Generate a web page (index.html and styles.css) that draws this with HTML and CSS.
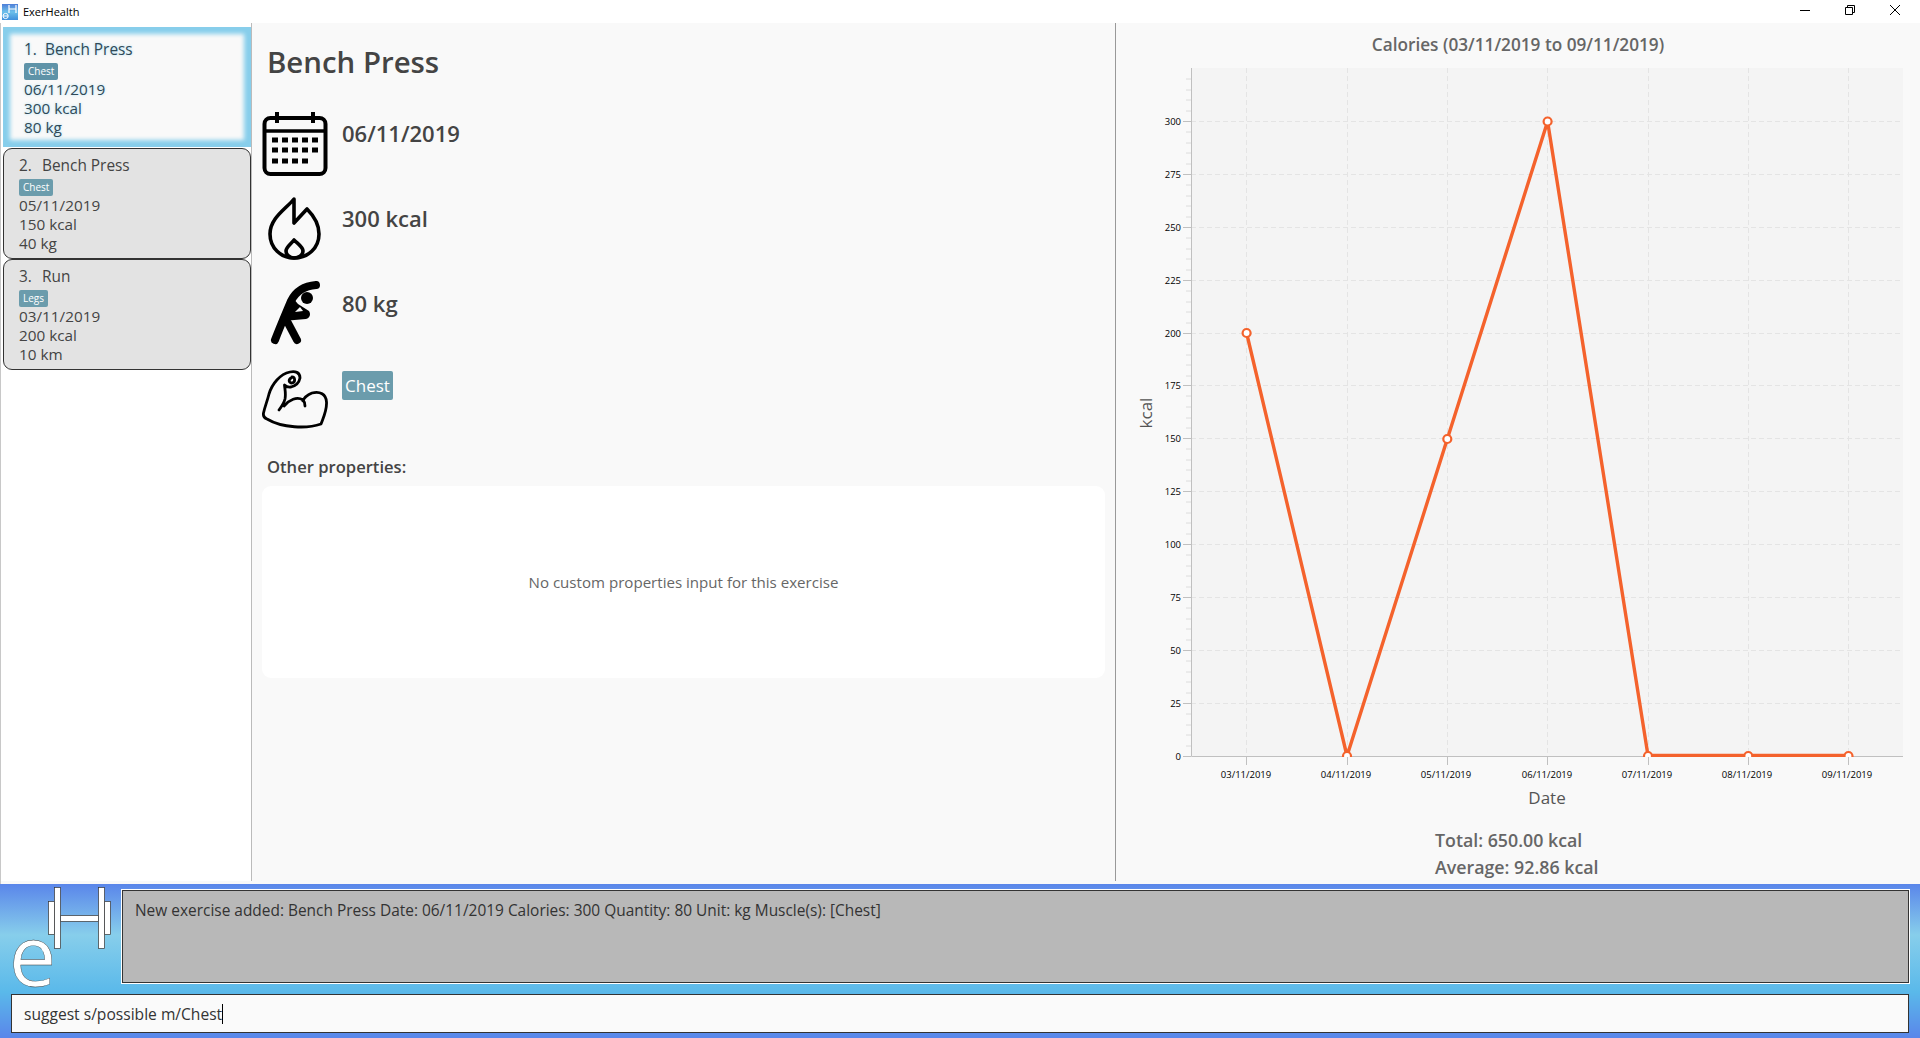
FILE: index.html
```html
<!DOCTYPE html>
<html lang="en">
<head>
<meta charset="utf-8">
<title>ExerHealth</title>
<link rel="stylesheet" href="styles.css">
</head>
<body>
<div class="window">
  <header class="titlebar">
    <div class="app-title">
      <svg class="app-icon" width="16" height="16" viewBox="0 0 16 16">
        <defs><linearGradient id="ig" x1="0" y1="0" x2="0" y2="1"><stop offset="0" stop-color="#4f7fd8"/><stop offset="0.5" stop-color="#6cc0ea"/><stop offset="1" stop-color="#3f8fdc"/></linearGradient></defs>
        <rect width="16" height="16" fill="url(#ig)"/>
        <path d="M7 1v8M14 1v8M7 5h7" stroke="#fff" stroke-width="1.2" fill="none"/>
        <circle cx="3.6" cy="12" r="2.6" stroke="#fff" stroke-width="1" fill="none"/>
        <path d="M1 12h5" stroke="#fff" stroke-width="1"/>
      </svg>
      <span>ExerHealth</span>
    </div>
    <div class="controls">
      <svg width="10" height="10" viewBox="0 0 10 10"><path d="M0 5.5h10" stroke="#000" fill="none"/></svg>
      <svg width="10" height="10" viewBox="0 0 10 10"><path d="M.5 2.5h7v7h-7zM2.5 2.5v-2h7v7h-2" stroke="#000" fill="none"/></svg>
      <svg width="10" height="10" viewBox="0 0 10 10"><path d="M0 0l10 10M10 0L0 10" stroke="#000" fill="none"/></svg>
    </div>
  </header>

  <main class="main">
    <aside class="list">
      <article class="card selected">
        <div class="card-title"><span class="num">1.</span>Bench Press</div>
        <span class="tag">Chest</span>
        <div class="card-line">06/11/2019</div>
        <div class="card-line">300 kcal</div>
        <div class="card-line">80 kg</div>
      </article>
      <article class="card">
        <div class="card-title"><span class="num">2.</span>Bench Press</div>
        <span class="tag">Chest</span>
        <div class="card-line">05/11/2019</div>
        <div class="card-line">150 kcal</div>
        <div class="card-line">40 kg</div>
      </article>
      <article class="card">
        <div class="card-title"><span class="num">3.</span>Run</div>
        <span class="tag">Legs</span>
        <div class="card-line">03/11/2019</div>
        <div class="card-line">200 kcal</div>
        <div class="card-line">10 km</div>
      </article>
    </aside>

    <section class="detail">
      <h1 class="detail-title">Bench Press</h1>
      <div class="prop">
        <svg class="prop-icon" width="66" height="66" viewBox="0 0 66 66" fill="none" stroke="#000">
          <rect x="2.5" y="7" width="61" height="56" rx="6" stroke-width="4"/>
          <path d="M2 20h62" stroke-width="3.5"/>
          <path d="M15 1v11M51 1v11" stroke-width="4"/>
          <path d="M10 29h6M20 29h6M30 29h6M40 29h6M50 29h6M10 39h6M20 39h6M30 39h6M40 39h6M50 39h6M10 50h6M20 50h6M30 50h6M40 50h6" stroke-width="5"/>
        </svg>
        <span class="prop-text">06/11/2019</span>
      </div>
      <div class="prop">
        <svg class="prop-icon" width="66" height="66" viewBox="0 0 66 66" fill="none" stroke="#000" stroke-width="3.6" stroke-linejoin="round">
          <path d="M32 3C24 13 8 22 8 38C8 52 19 62 32 62C46 62 57 52 57 38C57 29 52 20 45 13L32 27Z"/>
          <path d="M32 44C28 49 24 51 24 55C24 59 28 62 32 62C37 62 41 59 41 55C41 51 36 48 32 44Z"/>
        </svg>
        <span class="prop-text">300 kcal</span>
      </div>
      <div class="prop">
        <svg class="prop-icon" width="66" height="66" viewBox="0 0 66 66">
          <circle cx="45" cy="17" r="6" fill="#000"/>
          <path d="M54 4C42 5 34 10 29 20C24 32 18 46 13 59" stroke="#000" stroke-width="8" stroke-linecap="round" fill="none"/>
          <path d="M26 42L35 59" stroke="#000" stroke-width="8" stroke-linecap="round" fill="none"/>
          <path d="M30 16L21 40L44 38C48 37 49 33 47 30L36 23Z" fill="#000"/>
          <path d="M33 31L38 26L41 30Z" fill="#f9f9f9"/>
        </svg>
        <span class="prop-text">80 kg</span>
      </div>
      <div class="prop prop-tag">
        <svg class="prop-icon" width="66" height="66" viewBox="0 0 66 66" fill="none" stroke="#000" stroke-width="2.8" stroke-linecap="round" stroke-linejoin="round">
          <path d="M38 12C38 6 33 5 28 6C18 8 10 18 7 28C5 36 3 40 1.5 47C1 50 2 52 5 53C20 62 45 63 59 58C62 50 65 44 64.5 36C64 28 58 25 50 27C45 29 42 32 41 35M38 12C37 17 33 20 29 21C26 21.5 23.5 20 22.5 19C23 24 24 28 23 33C22 37 20 40 17 44M22 40C27 34 35 30 41 34C43 36 43 38 43 40"/>
          <path d="M29 12C26 14 27 17 30 17C34 16 33 11 30 11"/>
        </svg>
        <span class="big-tag">Chest</span>
      </div>
      <div class="other-label">Other properties:</div>
      <div class="other-box">No custom properties input for this exercise</div>
    </section>

    <section class="stats">
      <div class="chart-title">Calories (03/11/2019 to 09/11/2019)</div>
      <svg class="chart" width="804" height="765" viewBox="1116 60 804 765">
        <defs><clipPath id="plot"><rect x="1191" y="68" width="712" height="689"/></clipPath></defs>
        <rect x="1191" y="68" width="712" height="688" fill="#f4f4f4"/>
        <path class="grid" d="M1191 121.5H1903M1191 174.5H1903M1191 227.5H1903M1191 280.5H1903M1191 333.5H1903M1191 385.5H1903M1191 438.5H1903M1191 491.5H1903M1191 544.5H1903M1191 597.5H1903M1191 650.5H1903M1191 703.5H1903M1246.5 68V756M1347.5 68V756M1447.5 68V756M1547.5 68V756M1648.5 68V756M1748.5 68V756M1848.5 68V756"/>
        <path class="minor" d="M1186 79h5M1186 90h5M1186 100h5M1186 111h5M1186 132h5M1186 143h5M1186 153h5M1186 164h5M1186 185h5M1186 196h5M1186 206h5M1186 217h5M1186 238h5M1186 249h5M1186 259h5M1186 270h5M1186 291h5M1186 302h5M1186 312h5M1186 323h5M1186 344h5M1186 355h5M1186 365h5M1186 376h5M1186 396h5M1186 407h5M1186 418h5M1186 428h5M1186 449h5M1186 460h5M1186 470h5M1186 481h5M1186 502h5M1186 513h5M1186 523h5M1186 534h5M1186 555h5M1186 566h5M1186 576h5M1186 587h5M1186 608h5M1186 619h5M1186 629h5M1186 640h5M1186 661h5M1186 672h5M1186 682h5M1186 693h5M1186 714h5M1186 725h5M1186 735h5M1186 746h5"/>
        <path class="axis" d="M1191.5 68V756.5H1903M1183 121.5h8M1183 174.5h8M1183 227.5h8M1183 280.5h8M1183 333.5h8M1183 385.5h8M1183 438.5h8M1183 491.5h8M1183 544.5h8M1183 597.5h8M1183 650.5h8M1183 703.5h8M1183 756.5h8M1246.5 756v9M1347.5 756v9M1447.5 756v9M1547.5 756v9M1648.5 756v9M1748.5 756v9M1848.5 756v9"/>
        <g class="y-labels">
          <text x="1181" y="125">300</text><text x="1181" y="178">275</text><text x="1181" y="231">250</text><text x="1181" y="284">225</text><text x="1181" y="337">200</text><text x="1181" y="389">175</text><text x="1181" y="442">150</text><text x="1181" y="495">125</text><text x="1181" y="548">100</text><text x="1181" y="601">75</text><text x="1181" y="654">50</text><text x="1181" y="707">25</text><text x="1181" y="760">0</text>
        </g>
        <g class="x-labels">
          <text x="1246" y="778">03/11/2019</text><text x="1346" y="778">04/11/2019</text><text x="1446" y="778">05/11/2019</text><text x="1547" y="778">06/11/2019</text><text x="1647" y="778">07/11/2019</text><text x="1747" y="778">08/11/2019</text><text x="1847" y="778">09/11/2019</text>
        </g>
        <text class="axis-title" x="1547" y="804">Date</text>
        <text class="axis-title" transform="translate(1152 413) rotate(-90)">kcal</text>
        <g clip-path="url(#plot)">
          <polyline class="series" points="1246.6,333 1347,756 1447.3,439 1547.6,121.5 1648,755.5 1748.3,755.5 1848.5,755.5"/>
          <g class="points">
            <circle cx="1246.6" cy="333" r="4"/><circle cx="1347" cy="756" r="4"/><circle cx="1447.3" cy="439" r="4"/><circle cx="1547.6" cy="121.5" r="4"/><circle cx="1648" cy="756" r="4"/><circle cx="1748.3" cy="756" r="4"/><circle cx="1848.5" cy="756" r="4"/>
          </g>
        </g>
      </svg>
      <div class="totals">
        <div>Total: 650.00 kcal</div>
        <div>Average: 92.86 kcal</div>
      </div>
    </section>
  </main>

  <footer class="bottom">
    <div class="top-row">
      <svg class="logo" width="112" height="104" viewBox="0 0 112 104">
        <g fill="#fff" stroke="#333" stroke-width=".7">
          <rect x="38.5" y="16.5" width="6" height="33"/>
          <rect x="94.5" y="16.5" width="6" height="33"/>
          <rect x="50.5" y="30.5" width="38" height="6"/>
          <rect x="44.5" y="2.5" width="6" height="61"/>
          <rect x="88.5" y="2.5" width="6" height="61"/>
        </g>
        <text class="logo-e" x="-1" y="101">e</text>
      </svg>
      <div class="result">New exercise added: Bench Press Date: 06/11/2019 Calories: 300 Quantity: 80 Unit: kg Muscle(s): [Chest]</div>
    </div>
    <div class="command"><span>suggest s/possible m/Chest</span><i class="caret"></i></div>
  </footer>
</div>
</body>
</html>
```
FILE: styles.css
```css
* { box-sizing: border-box; }
html, body { margin: 0; height: 100%; }
body { font-family: "Open Sans", "Noto Sans", sans-serif; color: #444; background: #fff; overflow: hidden; }

.window { width: 1920px; height: 1038px; display: flex; flex-direction: column; }

.titlebar { height: 23px; flex: none; display: flex; justify-content: space-between; align-items: center; background: #fff; }
.app-title { display: flex; align-items: center; gap: 5px; padding-left: 2px; font-size: 11px; color: #000; }
.app-icon { display: block; }
.controls { display: flex; gap: 35px; padding-right: 20px; padding-bottom: 3px; }
.controls svg { display: block; }

.main { flex: 1; min-height: 0; display: flex; padding-bottom: 3px; background: #f9f9f9; border-left: 1px solid #c8c8c8; }

.list { width: 251px; flex: none; background: #fff; border-right: 1px solid #bbb; padding: 4px 0 0 2px; }
.card { height: 111px; width: 248px; padding: 6px 5px 0 15px; background: #e3e3e3; border: 1px solid #333; border-radius: 9px; font-size: 15.3px; line-height: 19px; color: #444; }
.card.selected + .card { margin-top: 1px; }
.card-title { font-size: 15.4px; line-height: 22px; font-weight: 500; color: #444; }
.num { display: inline-block; width: 23px; }
.tag { display: block; width: max-content; height: 17px; margin-top: 2px; padding: 0 4px; border-radius: 2px; background: #6b9cac; color: #fff; font-size: 10px; line-height: 17px; }
.card.selected { height: 120px; padding: 12px 5px 0 21px; border: 0; border-radius: 0; background: #f9f9f9; box-shadow: inset 0 0 4px 7px #87ceeb; color: #2f4a58; text-shadow: 0 0 3px #a9dcf0; }
.card.selected .num { width: 21px; }
.card.selected .card-title { color: #2f4a58; }
.card.selected .tag { text-shadow: none; background: #5f93a8; }

.detail { width: 864px; flex: none; border-right: 1px solid #999; padding: 0 10px; }
.detail-title { margin: 0; padding: 19px 0 0 5px; height: 88px; font-size: 29.4px; line-height: 40px; font-weight: 600; color: #444; }
.prop { display: flex; height: 85px; gap: 14px; align-items: flex-start; }
.prop-icon { display: block; flex: none; }
.prop-text { font-size: 22px; line-height: 32px; margin-top: 6px; font-weight: 600; color: #444; }
.prop-tag { height: 90px; }
.big-tag { margin-top: 5px; padding: 0 3px; height: 29px; line-height: 29px; font-size: 17px; font-weight: 500; background: #6b9cac; color: #fff; border-radius: 2px; }
.other-label { padding-left: 5px; font-size: 16.6px; line-height: 22px; font-weight: 600; color: #444; }
.other-box { margin-top: 8px; height: 192px; width: 843px; display: flex; align-items: center; justify-content: center; background: #fff; border-radius: 9px; font-size: 15.1px; color: #666; }

.stats { flex: 1; min-width: 0; display: flex; flex-direction: column; }
.chart-title { height: 37px; padding-top: 9px; text-align: center; font-size: 17.2px; line-height: 26px; font-weight: 600; color: #666; }
.chart { display: block; flex: none; overflow: visible; }
.grid { fill: none; stroke: #e4e4e4; stroke-width: 1; stroke-dasharray: 5 3; }
.minor { fill: none; stroke: #dcdcdc; stroke-width: 1; }
.axis { fill: none; stroke: #c0c0c0; stroke-width: 1; }
.y-labels text { font-size: 9.5px; fill: #000; text-anchor: end; }
.x-labels text { font-size: 9.5px; fill: #000; text-anchor: middle; }
.axis-title { font-size: 17px; font-weight: 500; fill: #555; text-anchor: middle; }
.series { fill: none; stroke: #f4622c; stroke-width: 3.4; stroke-linejoin: round; }
.points circle { fill: #fff; stroke: #f4622c; stroke-width: 2.2; }
.totals { padding: 2px 0 0 319px; font-size: 17.8px; line-height: 27px; font-weight: 600; color: #666; }

.bottom { height: 154px; flex: none; padding: 6px 11px 5px 11px; display: flex; flex-direction: column; gap: 11px; background: linear-gradient(to bottom, #5a86ea 0%, #87ceeb 33%, #5ab9ea 70%, #5a86ea 100%); }
.top-row { display: flex; height: 93px; }
.logo { display: block; flex: none; width: 112px; height: 104px; margin-left: -1px; margin-top: -5px; overflow: visible; }
.logo-e { font-family: "Open Sans", sans-serif; font-size: 84px; font-weight: 400; fill: #fff; stroke: #333; stroke-width: .4; }
.result { flex: 1; height: 93px; padding: 8px 12px; background: #b8b8b8; border: 1px solid #333; outline: 1px solid #fff; font-size: 15.45px; line-height: 22px; color: #333; }
.command { height: 39px; display: flex; align-items: center; padding-left: 12px; background: #fafafa; border: 1px solid #333; font-size: 15.6px; color: #333; }
.caret { display: block; width: 1px; height: 20px; background: #000; }
```
